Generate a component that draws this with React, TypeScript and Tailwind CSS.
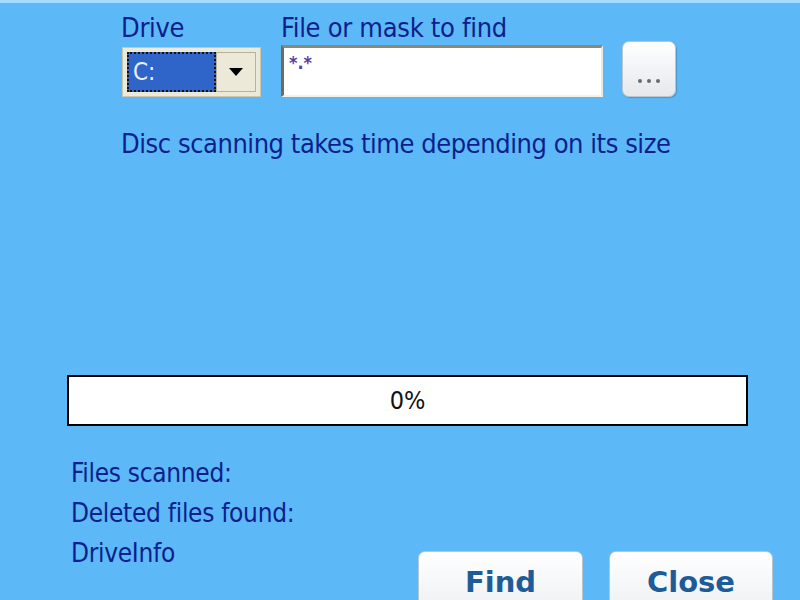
import React from "react";

const F = { fontFamily: '"Liberation Sans Narrow", "DejaVu Sans Condensed", "Liberation Sans", sans-serif' };

export default function App() {
  return (
    <div className="w-[800px] h-[600px] overflow-hidden bg-[#5db8f7] border-t-[3px] border-[#a6dcff] flex flex-col text-[#0c1f8c]" style={F}>
      {/* top controls */}
      <div className="shrink-0 flex pl-[121px] pt-[8px]">
        <div className="w-[160px] flex flex-col">
          <div className="text-[27px] leading-[34px] tracking-[-0.3px]">Drive</div>
          <div className="mt-[2px] ml-[1px] w-[139px] h-[50px] bg-[#ece9d8] border border-[#c9c5b0] p-[4px] flex">
            <div className="flex-1 bg-[#2f64c8] border-2 border-dotted border-[#111] flex items-center pl-[4px] text-[24px] text-[#e8f0ff]">C:</div>
            <div className="w-[40px] border border-[#b6b29c] bg-[#ece9d8] flex items-center justify-center">
              <svg width="16" height="10" viewBox="0 0 16 10"><path d="M1 1 L15 1 L8 9 Z" fill="#000" /></svg>
            </div>
          </div>
        </div>
        <div className="flex flex-col">
          <div className="text-[27px] leading-[34px] tracking-[-0.3px]">File or mask to find</div>
          <div className="flex items-center">
            <div className="w-[322px] h-[52px] bg-white border-t-[3px] border-l-[3px] border-b-2 border-r-2 border-t-[#8b8873] border-l-[#6f6c5c] border-b-[#f4f2e6] border-r-[#eceade] pl-[5px] pt-[6px] text-[#5a3ca8] text-[18px] leading-[18px] font-bold">*.*</div>
            <div className="ml-[19px] -mt-[4px] w-[54px] h-[56px] rounded-[7px] border border-[#b9c6d2] bg-gradient-to-b from-[#ffffff] to-[#e6e8ec] shadow-[1px_1px_1px_rgba(60,90,120,0.35)] flex items-end justify-center gap-[5px] pb-[13px]">
              <span className="w-[4px] h-[4px] rounded-full bg-[#6a6a6a]" />
              <span className="w-[4px] h-[4px] rounded-full bg-[#6a6a6a]" />
              <span className="w-[4px] h-[4px] rounded-full bg-[#6a6a6a]" />
            </div>
          </div>
        </div>
      </div>
      <div className="shrink-0 pl-[121px] mt-[30px] text-[27px] leading-[34px] tracking-[-0.45px]">Disc scanning takes time depending on its size</div>

      {/* progress */}
      <div className="shrink-0 mt-[214px] ml-[67px] w-[681px] h-[51px] border-2 border-black bg-white flex items-center justify-center text-[25px] text-[#111]">0%</div>

      {/* bottom */}
      <div className="shrink-0 flex pl-[71px] mt-[27px]">
        <div className="w-[347px] shrink-0 flex flex-col text-[26px] leading-[40px] tracking-[-0.3px]">
          <div>Files scanned:</div>
          <div>Deleted files found:</div>
          <div>DriveInfo</div>
        </div>
        <div className="flex gap-[26px] mt-[98px]">
          <div className="w-[165px] h-[60px] shrink-0 rounded-t-[7px] border border-[#b8c4d0] bg-gradient-to-b from-white to-[#eef0f3] flex justify-center pt-[9px] text-[29px] font-bold text-[#1d5c98]" style={{ fontFamily: '"DejaVu Sans", Verdana, sans-serif' }}>Find</div>
          <div className="w-[164px] h-[60px] shrink-0 rounded-t-[7px] border border-[#b8c4d0] bg-gradient-to-b from-white to-[#eef0f3] flex justify-center pt-[9px] text-[29px] font-bold text-[#1d5c98]" style={{ fontFamily: '"DejaVu Sans", Verdana, sans-serif' }}>Close</div>
        </div>
      </div>
    </div>
  );
}
